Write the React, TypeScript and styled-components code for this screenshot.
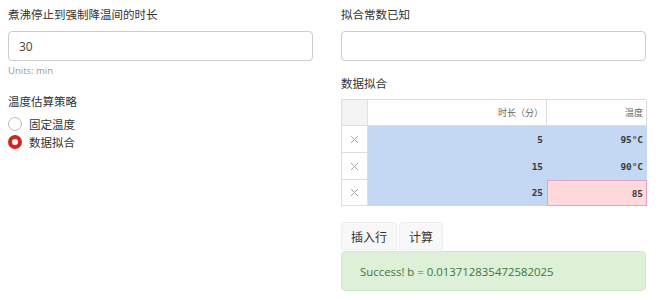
import React from "react";
import styled, { createGlobalStyle } from "styled-components";

const Global = createGlobalStyle`
  html, body { margin: 0; padding: 0; background: #fff; }
  body { font-family: "Open Sans", "Noto Sans CJK SC", sans-serif; color: #333; }
`;

const Page = styled.div`
  display: grid;
  grid-template-columns: 305px 305px;
  column-gap: 28px;
  padding: 6px 20px 0 8px;
  align-items: start;
`;

const Column = styled.div`
  display: flex;
  flex-direction: column;
`;

const Label = styled.div<{ $mt?: number }>`
  font-family: "Noto Sans CJK SC", sans-serif;
  font-size: 11.5px;
  line-height: 17px;
  color: #333;
  margin-top: ${(p) => p.$mt ?? 0}px;
`;

const TextInput = styled.div`
  box-sizing: border-box;
  height: 30px;
  margin-top: 8px;
  border: 1px solid #ccc;
  border-radius: 4px;
  padding: 0 10px;
  display: flex;
  align-items: center;
  font-family: "Open Sans", sans-serif;
  font-size: 12px;
  color: #444;
  background: #fff;
`;

const Help = styled.div`
  margin-top: 3px;
  font-family: "Open Sans", sans-serif;
  font-size: 9.5px;
  line-height: 14px;
  color: #999;
`;

const RadioList = styled.div`
  margin-top: 5px;
  display: flex;
  flex-direction: column;
`;

const RadioRow = styled.label`
  display: flex;
  align-items: center;
  gap: 7px;
  height: 18px;
  font-family: "Noto Sans CJK SC", sans-serif;
  font-size: 11.5px;
  color: #333;
`;

const RadioDot = styled.span<{ $on?: boolean }>`
  box-sizing: border-box;
  width: 14px;
  height: 14px;
  border-radius: 50%;
  background: #fff;
  border: ${(p) => (p.$on ? "4px solid #d42620" : "1px solid #bbb")};
`;

const Grid = styled.div`
  margin-top: 7px;
  display: grid;
  grid-template-columns: 26px 179px 100px;
  grid-template-rows: 26px 27px 27px 26px;
  box-sizing: border-box;
  border-top: 1px solid #ddd;
  border-left: 1px solid #ddd;
`;

const Cell = styled.div<{ $kind: "corner" | "head" | "row" | "data" | "bad" }>`
  box-sizing: border-box;
  display: flex;
  align-items: center;
  justify-content: ${(p) => (p.$kind === "row" ? "center" : "flex-end")};
  padding-right: 3px;
  padding-left: ${(p) => (p.$kind === "row" ? "3px" : "0")};
  background: ${(p) =>
    p.$kind === "corner"
      ? "#f3f3f3"
      : p.$kind === "data"
      ? "#c4d7f3"
      : p.$kind === "bad"
      ? "#ffd9db"
      : "#fff"};
  border-right: 1px solid
    ${(p) => (p.$kind === "data" ? "#c4d7f3" : p.$kind === "bad" ? "#e4a2c6" : "#ddd")};
  border-bottom: 1px solid
    ${(p) => (p.$kind === "data" ? "#c4d7f3" : p.$kind === "bad" ? "#e4a2c6" : "#ddd")};
  ${(p) => (p.$kind === "bad" ? "border-left: 1px solid #e4a2c6; border-top: 1px solid #e4a2c6;" : "")}
  font-family: ${(p) =>
    p.$kind === "head" ? '"Noto Sans CJK SC", sans-serif' : '"DejaVu Sans Mono", monospace'};
  font-size: ${(p) => (p.$kind === "head" ? "9px" : "9.4px")};
  font-weight: ${(p) => (p.$kind === "data" || p.$kind === "bad" ? "bold" : "normal")};
  color: ${(p) => (p.$kind === "head" ? "#666" : "#3a3a3a")};
`;

const ButtonBar = styled.div`
  margin-top: 16px;
  display: flex;
  gap: 2px;
`;

const Button = styled.button`
  box-sizing: border-box;
  height: 28px;
  padding: 0 9px;
  border: 1px solid #eee;
  border-radius: 4px 4px 0 0;
  background: #f8f8f8;
  font-family: "Noto Sans CJK SC", sans-serif;
  font-size: 12px;
  color: #333;
`;

const Alert = styled.div`
  box-sizing: border-box;
  margin-top: 1px;
  height: 40px;
  padding: 0 18px;
  display: flex;
  align-items: center;
  background: #dff0d8;
  border: 1px solid #d6e9c6;
  border-radius: 4px;
  font-family: "Open Sans", sans-serif;
  font-size: 11.4px;
  color: #3c763d;
`;

const Cross = () => (
  <svg width="9" height="9" viewBox="0 0 9 9">
    <path d="M1 1 L8 8 M8 1 L1 8" stroke="#a8a8a8" strokeWidth="1" fill="none" />
  </svg>
);

const rows = [
  { t: "5", temp: "95°C", bad: false },
  { t: "15", temp: "90°C", bad: false },
  { t: "25", temp: "85", bad: true },
];

export default function App() {
  return (
    <>
      <Global />
      <Page>
        <Column>
          <Label>煮沸停止到强制降温间的时长</Label>
          <TextInput>30</TextInput>
          <Help>Units: min</Help>
          <Label $mt={15}>温度估算策略</Label>
          <RadioList>
            <RadioRow>
              <RadioDot />
              固定温度
            </RadioRow>
            <RadioRow>
              <RadioDot $on />
              数据拟合
            </RadioRow>
          </RadioList>
        </Column>
        <Column>
          <Label>拟合常数已知</Label>
          <TextInput />
          <Label $mt={14}>数据拟合</Label>
          <Grid>
            <Cell $kind="corner" />
            <Cell $kind="head">时长（分）</Cell>
            <Cell $kind="head">温度</Cell>
            {rows.map((r) => (
              <React.Fragment key={r.t}>
                <Cell $kind="row">
                  <Cross />
                </Cell>
                <Cell $kind="data">{r.t}</Cell>
                <Cell $kind={r.bad ? "bad" : "data"}>{r.temp}</Cell>
              </React.Fragment>
            ))}
          </Grid>
          <ButtonBar>
            <Button>插入行</Button>
            <Button>计算</Button>
          </ButtonBar>
          <Alert>Success! b = 0.013712835472582025</Alert>
        </Column>
      </Page>
    </>
  );
}
